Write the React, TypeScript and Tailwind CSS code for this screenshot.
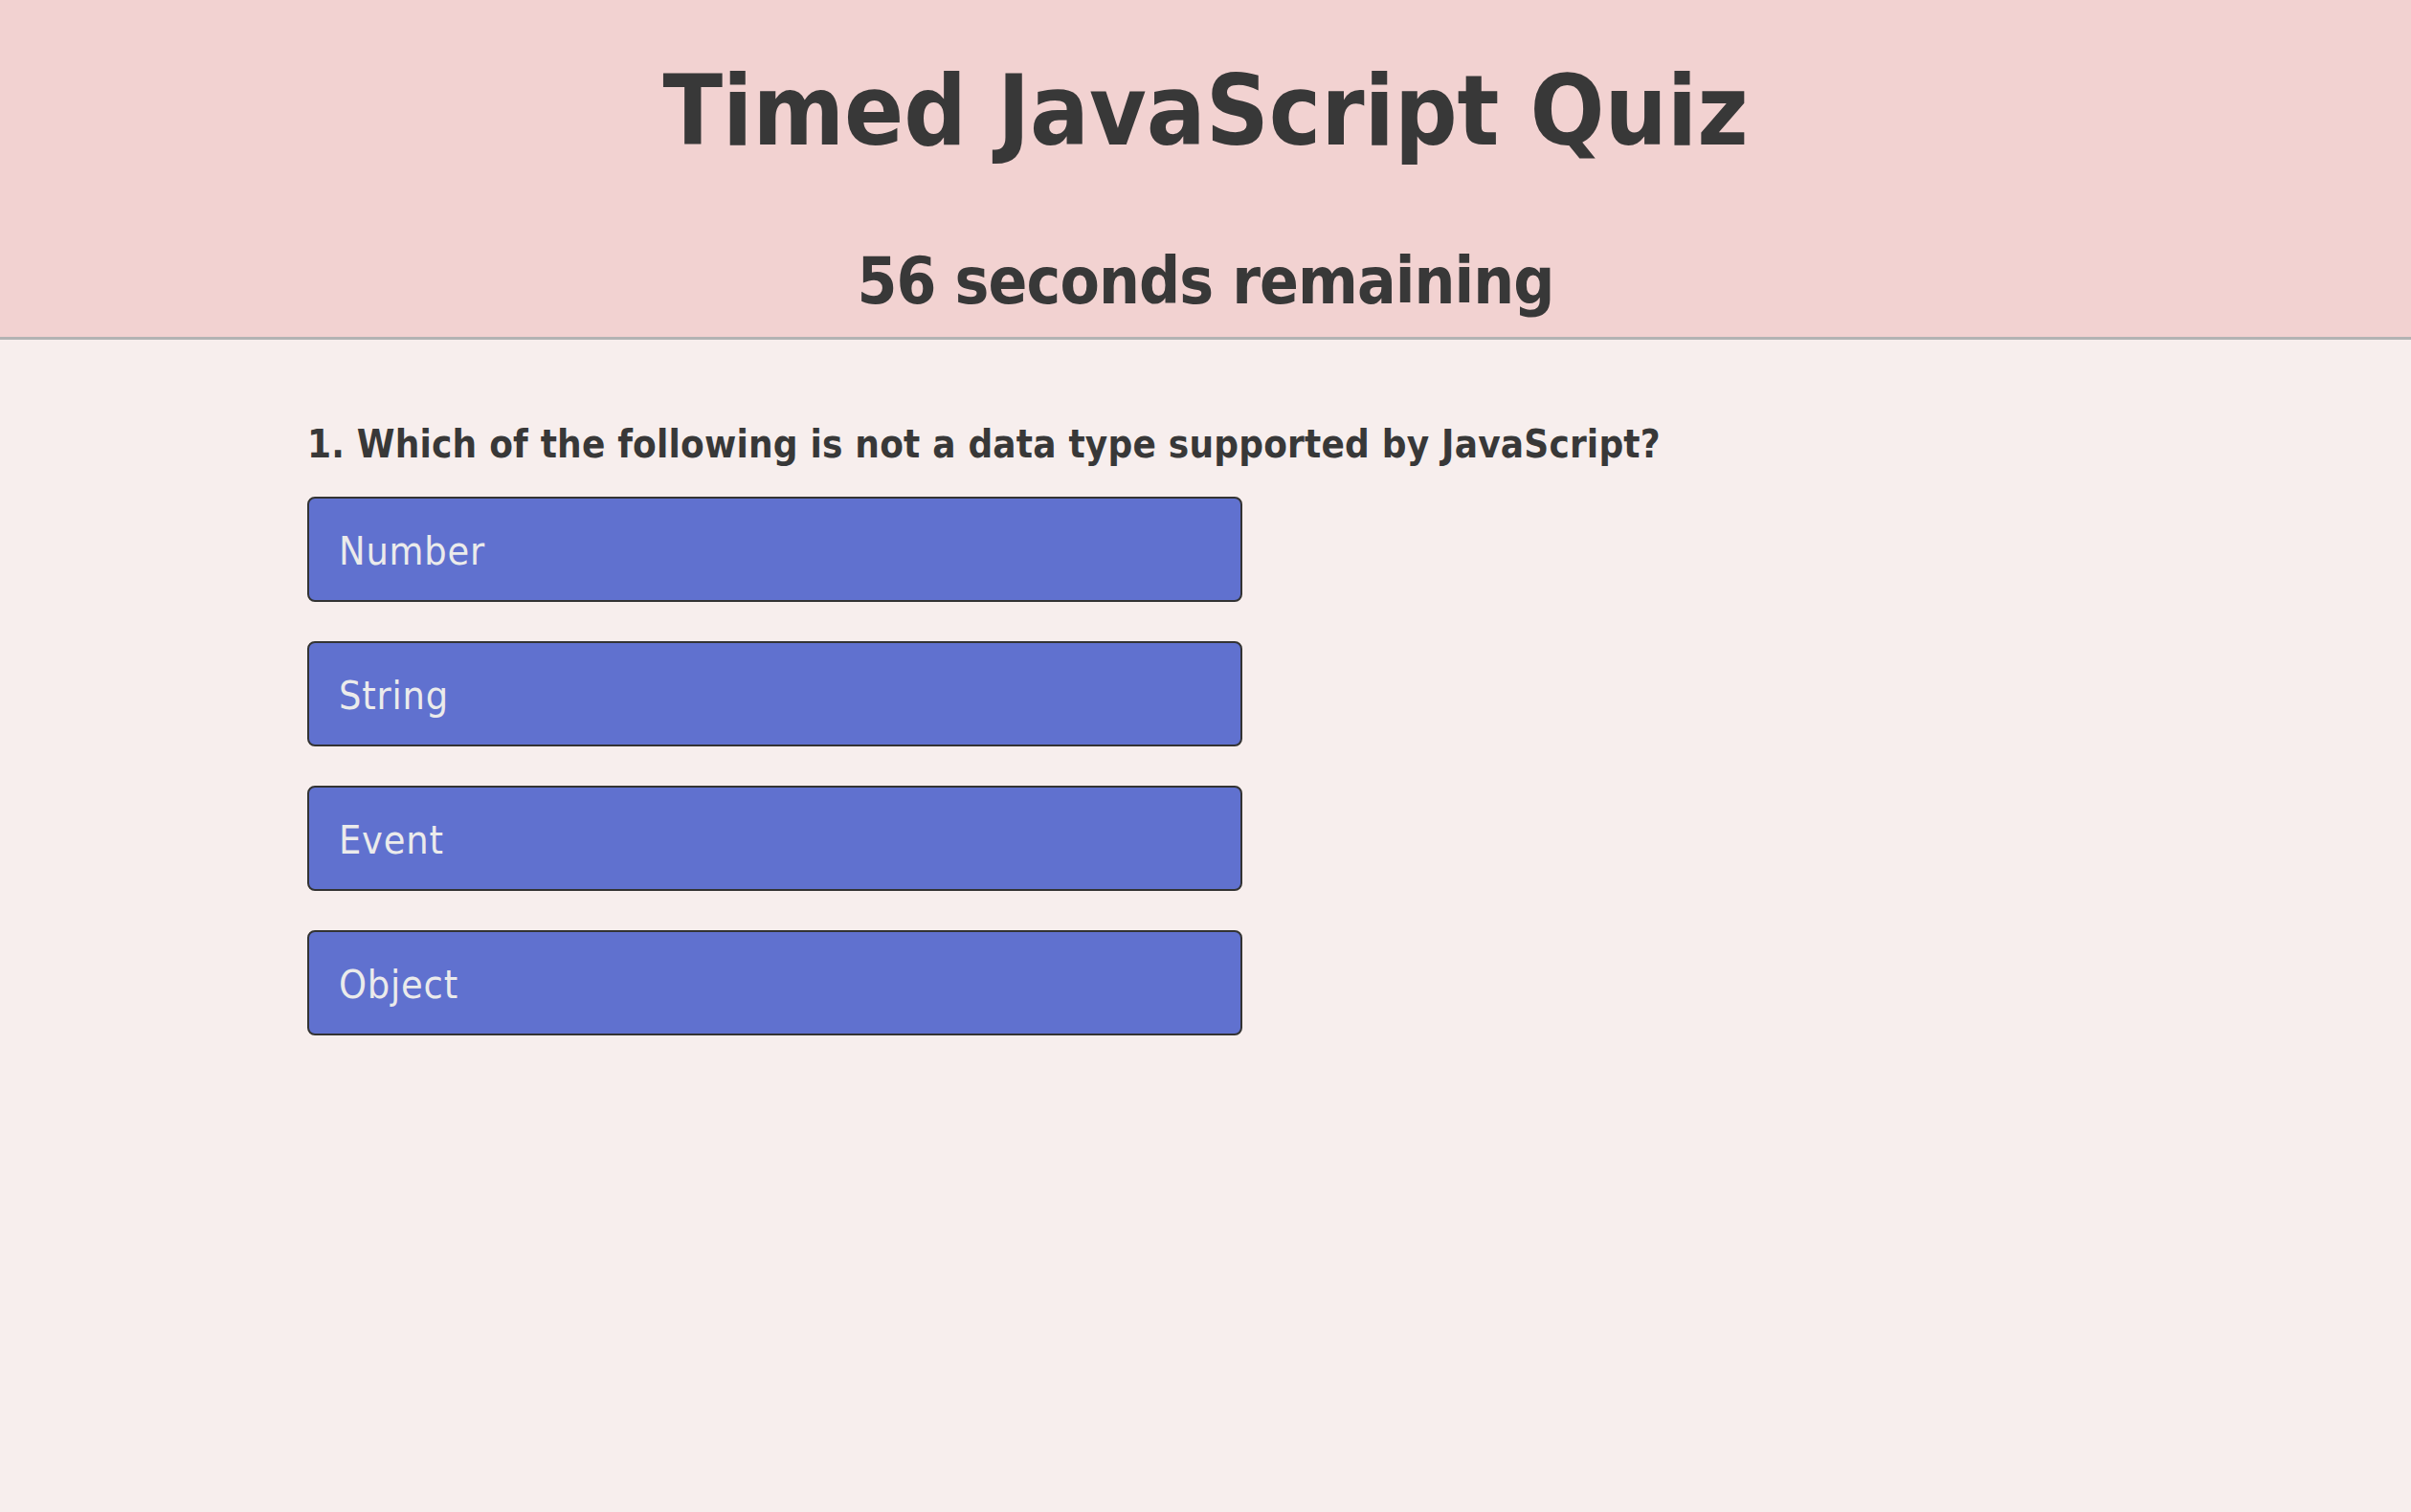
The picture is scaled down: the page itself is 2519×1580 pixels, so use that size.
const answers = ["Number", "String", "Event", "Object"];

export default function App() {
  return (
    <div className="min-h-[1580px] bg-[#f7eeed] text-[#383838] font-['DejaVu_Sans_Condensed','DejaVu_Sans',sans-serif]">
      <header className="bg-[#f2d2d1] border-b-[3px] border-[#b3b3b3] pt-[65px] pb-[24px] text-center">
        <h1 className="text-[102px] leading-none font-bold">Timed JavaScript Quiz</h1>
        <h2 className="mt-[94px] text-[67px] leading-none font-bold tracking-[-0.9px]">56 seconds remaining</h2>
      </header>

      <main className="pl-[321px] pt-[89px]">
        <p className="text-[40px] leading-none font-bold tracking-[0.2px]">
          1. Which of the following is not a data type supported by JavaScript?
        </p>
        <div className="mt-[35px] flex flex-col gap-[41px]">
          {answers.map((a) => (
            <button
              key={a}
              className="w-[977px] h-[110px] flex items-center pl-[31px] pt-[4px] bg-[#6071cf] border-2 border-[#333] rounded-[8px] text-[41px] leading-none tracking-[0.8px] text-[#ebebeb]"
            >
              {a}
            </button>
          ))}
        </div>
      </main>
    </div>
  );
}
